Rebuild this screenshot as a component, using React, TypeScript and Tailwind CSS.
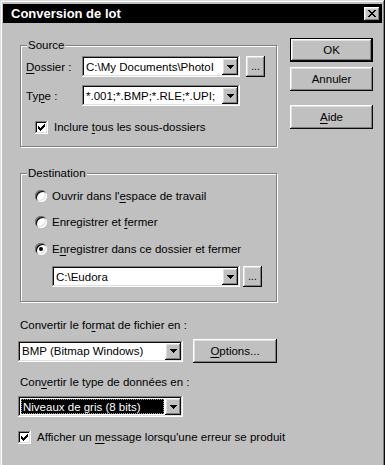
import React from "react"

const raised = "shadow-[inset_-1px_-1px_#0a0a0a,inset_1px_1px_#ffffff,inset_-2px_-2px_#808080,inset_2px_2px_#dfdfdf]"
const sunken = "shadow-[inset_-1px_-1px_#ffffff,inset_1px_1px_#808080,inset_-2px_-2px_#dfdfdf,inset_2px_2px_#0a0a0a]"
const etched = "border border-[#808080] shadow-[inset_1px_1px_#ffffff,1px_1px_#ffffff]"

function Key({ children }: { children: React.ReactNode }) {
    return <span className="underline decoration-1 underline-offset-[2px]">{children}</span>
}

function Arrow() {
    return (
        <svg width="7" height="4" viewBox="0 0 7 4" shapeRendering="crispEdges">
            <rect x="0" y="0" width="7" height="1" />
            <rect x="1" y="1" width="5" height="1" />
            <rect x="2" y="2" width="3" height="1" />
            <rect x="3" y="3" width="1" height="1" />
        </svg>
    )
}

function Combo({ value, className = "", selected = false }: { value: string; className?: string; selected?: boolean }) {
    return (
        <div className={`h-[21px] bg-white p-[2px] flex shrink-0 ${sunken} ${className}`}>
            <div className="flex-1 min-w-0 flex items-center overflow-hidden whitespace-nowrap">
                {selected ? (
                    <span className="flex-1 mx-[1px] h-[15px] bg-black text-white pl-[1px] border border-dotted border-[#9a9a9a] flex items-center">
                        {value}
                    </span>
                ) : (
                    <span className="pl-[2px]">{value}</span>
                )}
            </div>
            <div className={`w-[16px] h-[17px] bg-[#c0c0c0] flex items-center justify-center ${raised}`}>
                <Arrow />
            </div>
        </div>
    )
}

function Dots({ className = "" }: { className?: string }) {
    return (
        <div className={`w-[19px] h-[21px] bg-[#c0c0c0] flex items-end justify-center pb-[5px] shrink-0 ${raised} ${className}`}>
            <span className="text-[10px] leading-none">...</span>
        </div>
    )
}

function Check() {
    return (
        <div className={`w-[13px] h-[13px] bg-white flex items-center justify-center shrink-0 ${sunken}`}>
            <svg width="7" height="7" viewBox="0 0 7 7" shapeRendering="crispEdges">
                <rect x="6" y="0" width="1" height="1" />
                <rect x="5" y="1" width="2" height="1" />
                <rect x="0" y="2" width="1" height="1" />
                <rect x="4" y="2" width="3" height="1" />
                <rect x="0" y="3" width="2" height="1" />
                <rect x="3" y="3" width="3" height="1" />
                <rect x="0" y="4" width="5" height="1" />
                <rect x="1" y="5" width="3" height="1" />
                <rect x="2" y="6" width="1" height="1" />
            </svg>
        </div>
    )
}

function Radio({ checked = false }: { checked?: boolean }) {
    return (
        <div className="w-[12px] h-[12px] rounded-full bg-white flex items-center justify-center shrink-0 shadow-[inset_1px_1px_#808080,inset_-1px_-1px_#ffffff,inset_2px_2px_#0a0a0a,inset_-2px_-2px_#dfdfdf]">
            {checked && <div className="w-[4px] h-[4px] rounded-full bg-black" />}
        </div>
    )
}

function Btn({ children, def = false, className = "" }: { children: React.ReactNode; def?: boolean; className?: string }) {
    if (def) {
        return (
            <div className={`h-[24px] border border-black ${className}`}>
                <div className={`h-full bg-[#c0c0c0] flex items-center justify-center ${raised}`}>{children}</div>
            </div>
        )
    }
    return (
        <div className={`h-[24px] bg-[#c0c0c0] flex items-center justify-center ${raised} ${className}`}>{children}</div>
    )
}

function CloseButton() {
    return (
        <div className={`w-[16px] h-[14px] bg-[#c0c0c0] flex items-center justify-center pr-[1px] ${raised}`}>
            <svg width="8" height="7" viewBox="0 0 8 7" shapeRendering="crispEdges">
                <rect x="0" y="0" width="2" height="1" />
                <rect x="6" y="0" width="2" height="1" />
                <rect x="1" y="1" width="2" height="1" />
                <rect x="5" y="1" width="2" height="1" />
                <rect x="2" y="2" width="4" height="1" />
                <rect x="3" y="3" width="2" height="1" />
                <rect x="2" y="4" width="4" height="1" />
                <rect x="1" y="5" width="2" height="1" />
                <rect x="5" y="5" width="2" height="1" />
                <rect x="0" y="6" width="2" height="1" />
                <rect x="6" y="6" width="2" height="1" />
            </svg>
        </div>
    )
}

export default function App() {
    return (
        <div className="w-[387px] h-[465px] bg-white overflow-hidden font-['Liberation_Sans',Arial,sans-serif] text-[11.5px] leading-[14px] text-black">
            <div className={`w-[385px] h-[480px] bg-[#c0c0c0] pt-[4px] px-[3px] shadow-[inset_-1px_-1px_#0a0a0a,inset_1px_1px_#dfdfdf,inset_-2px_-2px_#808080,inset_2px_2px_#ffffff]`}>
                {/* title bar */}
                <div className="h-[19px] bg-black flex items-center justify-between pl-[8px] pr-[2px]">
                    <span className="text-white font-bold text-[13px] leading-[16px]">Conversion de lot</span>
                    <CloseButton />
                </div>

                <div className="flex pl-[15px] pt-[15px]">
                    {/* left column */}
                    <div className="w-[259px] flex flex-col">
                        <div className={`relative ml-[2px] mt-[7px] pt-[10px] pb-[12px] ${etched}`}>
                            <span className="absolute -top-[8px] left-[6px] px-[1px] bg-[#c0c0c0]">Source</span>
                            <div className="flex items-center pl-[5px]">
                                <span className="w-[56px]"><Key>D</Key>ossier :</span>
                                <Combo className="w-[158px]" value={"C:\\My Documents\\PhotoI"} />
                                <Dots className="ml-[6px]" />
                            </div>
                            <div className="flex items-center pl-[5px] mt-[8px]">
                                <span className="w-[56px]">Ty<Key>p</Key>e :</span>
                                <Combo className="w-[158px]" value="*.001;*.BMP;*.RLE;*.UPI;" />
                            </div>
                            <div className="flex items-center h-[14px] pl-[14px] mt-[14px]">
                                <Check />
                                <span className="ml-[6px]">Inclure <Key>t</Key>ous les sous-dossiers</span>
                            </div>
                        </div>

                        <div className={`relative ml-[2px] mt-[26px] pt-[14px] pb-[14px] ${etched}`}>
                            <span className="absolute -top-[8px] left-[6px] px-[1px] bg-[#c0c0c0]">Destination</span>
                            <div className="flex items-center h-[16px] pl-[14px]">
                                <Radio />
                                <span className="ml-[5px]">Ouvrir dans l'<Key>e</Key>space de travail</span>
                            </div>
                            <div className="flex items-center h-[16px] pl-[14px] mt-[10px]">
                                <Radio />
                                <span className="ml-[5px]">Enregistrer et <Key>f</Key>ermer</span>
                            </div>
                            <div className="flex items-center h-[16px] pl-[14px] mt-[11px]">
                                <Radio checked />
                                <span className="ml-[5px]">E<Key>n</Key>registrer dans ce dossier et fermer</span>
                            </div>
                            <div className="flex items-center pl-[31px] mt-[9px]">
                                <Combo className="w-[188px]" value={"C:\\Eudora"} />
                                <Dots className="ml-[3px]" />
                            </div>
                        </div>

                        <span className="pl-[2px] mt-[16px]">Convertir le fo<Key>r</Key>mat de fichier en :</span>
                        <div className="flex items-center h-[24px] mt-[7px]">
                            <Combo className="w-[165px]" value="BMP (Bitmap Windows)" />
                            <Btn className="ml-[10px] w-[84px]"><span><Key>O</Key>ptions...</span></Btn>
                        </div>

                        <span className="pl-[2px] mt-[12px]">Con<Key>v</Key>ertir le type de données en :</span>
                        <Combo className="w-[165px] mt-[7px]" value="Niveaux de gris (8 bits)" selected />

                        <div className="flex items-center h-[14px] mt-[13px] whitespace-nowrap">
                            <Check />
                            <span className="ml-[6px]">Afficher un <Key>m</Key>essage lorsqu'une erreur se produit</span>
                        </div>
                    </div>

                    {/* right column */}
                    <div className="ml-[13px] w-[83px] flex flex-col">
                        <Btn def>OK</Btn>
                        <Btn className="mt-[5px]">Annuler</Btn>
                        <Btn className="mt-[14px]"><span><Key>A</Key>ide</span></Btn>
                    </div>
                </div>
            </div>
        </div>
    )
}
